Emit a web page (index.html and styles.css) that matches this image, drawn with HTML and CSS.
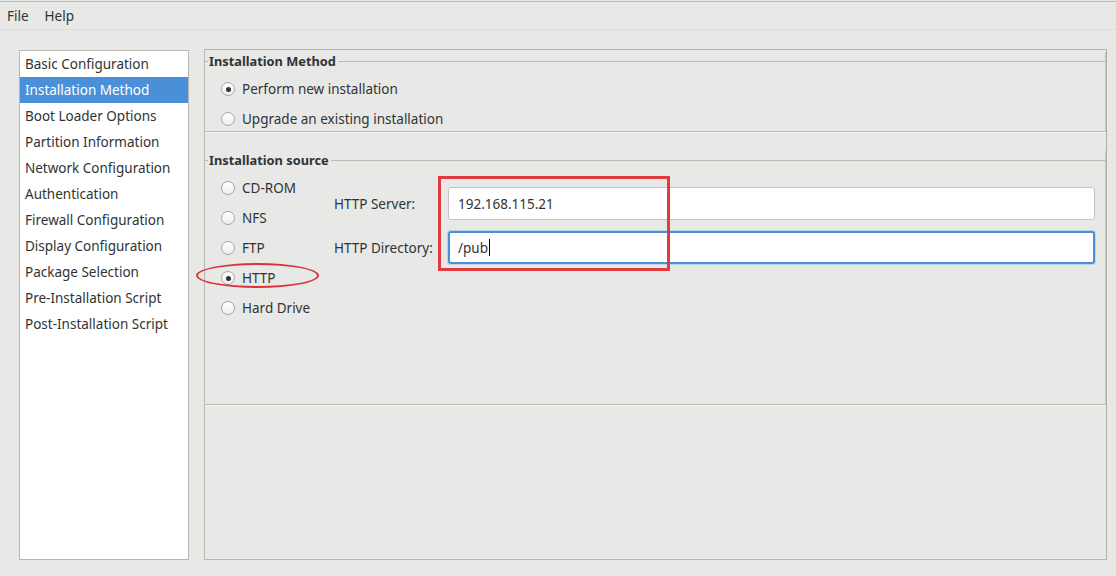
FILE: index.html
```html
<!DOCTYPE html>
<html>
<head>
<meta charset="utf-8">
<title>Kickstart Configurator</title>
<link rel="stylesheet" href="styles.css">
</head>
<body>
<div class="menubar">
  <span class="menu-item">File</span>
  <span class="menu-item">Help</span>
</div>
<div class="main">
  <ul class="sidebar">
    <li class="nav-item">Basic Configuration</li>
    <li class="nav-item selected">Installation Method</li>
    <li class="nav-item">Boot Loader Options</li>
    <li class="nav-item">Partition Information</li>
    <li class="nav-item">Network Configuration</li>
    <li class="nav-item">Authentication</li>
    <li class="nav-item">Firewall Configuration</li>
    <li class="nav-item">Display Configuration</li>
    <li class="nav-item">Package Selection</li>
    <li class="nav-item">Pre-Installation Script</li>
    <li class="nav-item">Post-Installation Script</li>
  </ul>
  <div class="panel">
    <div class="frame frame-method">
      <div class="frame-head"><span class="frame-label">Installation Method</span></div>
      <div class="frame-body method-body">
        <label class="radio-row"><span class="radio checked"></span>Perform new installation</label>
        <label class="radio-row"><span class="radio"></span>Upgrade an existing installation</label>
      </div>
    </div>
    <div class="frame frame-source">
      <div class="frame-head"><span class="frame-label">Installation source</span></div>
      <div class="frame-body source-body">
        <div class="source-list">
          <label class="radio-row"><span class="radio"></span>CD-ROM</label>
          <label class="radio-row"><span class="radio"></span>NFS</label>
          <label class="radio-row"><span class="radio"></span>FTP</label>
          <label class="radio-row"><span class="radio checked"></span>HTTP</label>
          <label class="radio-row"><span class="radio"></span>Hard Drive</label>
        </div>
        <div class="fields">
          <span class="field-label">HTTP Server:</span>
          <div class="entry">192.168.115.21</div>
          <span class="field-label">HTTP Directory:</span>
          <div class="entry focused">/pub<span class="caret"></span></div>
        </div>
      </div>
    </div>
  </div>
</div>
<div class="annot-box"></div>
<div class="annot-ellipse"></div>
</body>
</html>
```

FILE: styles.css
```css
html, body {
  margin: 0;
  padding: 0;
}
body {
  width: 1116px;
  height: 576px;
  overflow: hidden;
  background: #e8e8e7;
  color: #2e3436;
  font-family: "Noto Sans", "DejaVu Sans", sans-serif;
  font-size: 13.5px;
  position: relative;
}
.menubar {
  margin-top: 1px;
  border-top: 1px solid #b9b9b5;
  height: 27px;
  border-bottom: 1px solid #dcdcda;
  display: flex;
  align-items: center;
  padding-left: 7px;
  gap: 16px;
  box-sizing: content-box;
}
.menu-item {
  line-height: 18px;
}
.main {
  display: flex;
  align-items: flex-start;
  padding: 19px 9px 0 19px;
  gap: 15px;
}
.sidebar {
  list-style: none;
  margin: 1px 0 0 0;
  padding: 0;
  width: 170px;
  height: 510px;
  box-sizing: border-box;
  background: #ffffff;
  border: 1px solid #b6b6b3;
}
.nav-item {
  height: 26px;
  line-height: 27px;
  padding-left: 5px;
  white-space: nowrap;
}
.nav-item.selected {
  background: #4a90d9;
  color: #ffffff;
}
.panel {
  flex: 1;
  height: 511px;
  box-sizing: border-box;
  border: 1px solid #b6b6b3;
  border-right-color: #aeaeaa;
}
.frame {
  border-bottom: 1px solid #b9b9b5;
  border-right: 1px solid #c6c6c2;
  box-shadow: 0 1px 0 #f4f4f2;
}
.frame-method {
  margin-top: 2px;
}
.frame-source {
  margin-top: 19px;
}
.frame-head {
  height: 18px;
  display: flex;
  align-items: center;
}
.frame-head::before {
  content: "";
  width: 3px;
  border-top: 1px solid #b9b9b5;
}
.frame-head::after {
  content: "";
  flex: 1;
  margin-left: 2px;
  border-top: 1px solid #b9b9b5;
}
.frame-label {
  font-weight: bold;
  font-size: 12.8px;
  padding-left: 1px;
}
.frame-body {
  box-sizing: border-box;
}
.method-body {
  height: 61px;
  padding: 7px 0 0 16px;
  display: flex;
  flex-direction: column;
  gap: 6px;
}
.source-body {
  height: 235px;
  padding-top: 7px;
  display: flex;
  align-items: flex-start;
}
.source-list {
  width: 129px;
  box-sizing: border-box;
  padding-left: 16px;
  display: flex;
  flex-direction: column;
  gap: 6px;
}
.radio-row {
  height: 24px;
  display: flex;
  align-items: center;
  gap: 7px;
  white-space: nowrap;
}
.radio {
  width: 14px;
  height: 14px;
  box-sizing: border-box;
  border: 1px solid #a7a7a3;
  border-radius: 50%;
  background: linear-gradient(#ffffff, #ededeb);
  display: flex;
  align-items: center;
  justify-content: center;
  flex: none;
}
.radio.checked::after {
  content: "";
  width: 5px;
  height: 5px;
  border-radius: 50%;
  background: #2e3436;
}
.fields {
  flex: 1;
  margin: 11px 10px 0 0;
  display: grid;
  grid-template-columns: 100px 1fr;
  column-gap: 14px;
  row-gap: 11px;
  align-items: center;
}
.field-label {
  white-space: nowrap;
}
.entry {
  height: 33px;
  box-sizing: border-box;
  background: #ffffff;
  border: 1px solid #c3c3bf;
  border-radius: 3px;
  padding-left: 9px;
  display: flex;
  align-items: center;
  color: #2e3436;
}
.entry.focused {
  border: 2px solid #4a90d9;
  padding-left: 8px;
  box-shadow: 0 0 0 1px rgba(74, 144, 217, 0.25);
}
.caret {
  display: inline-block;
  width: 1px;
  height: 17px;
  background: #000000;
  margin-left: 1px;
}
.annot-box {
  position: absolute;
  left: 438px;
  top: 176px;
  width: 232px;
  height: 95px;
  box-sizing: border-box;
  border: 3px solid #e23b3f;
}
.annot-ellipse {
  position: absolute;
  left: 196px;
  top: 263px;
  width: 123px;
  height: 25px;
  box-sizing: border-box;
  border: 2.5px solid #d8343c;
  border-radius: 50%;
}
```
